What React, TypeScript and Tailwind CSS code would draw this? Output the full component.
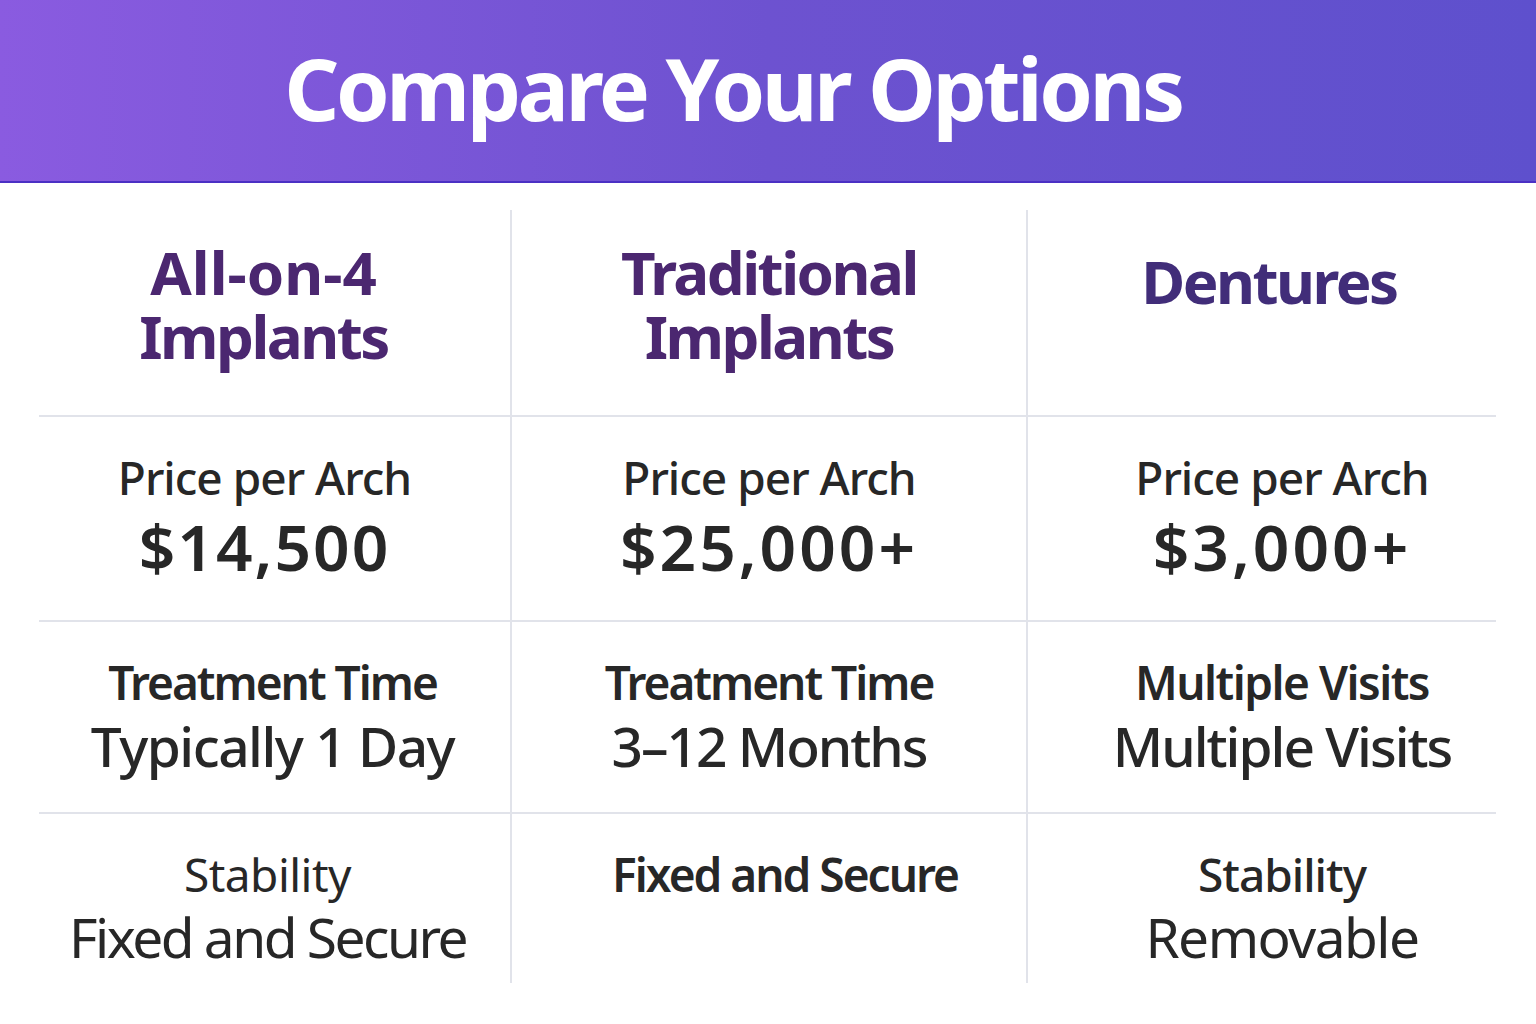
const font = { fontFamily: '"Noto Sans", "Open Sans", sans-serif' };

type Cell = {
  label?: string;
  labelClass?: string;
  value?: string;
  valueClass?: string;
  cellClass: string;
};

const rows: Cell[][] = [
  [
    {
      label: "Price per Arch",
      labelClass: "font-medium tracking-[-1px]",
      value: "$14,500",
      valueClass: "text-[64px] font-semibold leading-[1.2] tracking-[2px] mt-[4px]",
      cellClass: "pr-[20px]",
    },
    {
      label: "Price per Arch",
      labelClass: "font-medium tracking-[-1px]",
      value: "$25,000+",
      valueClass: "text-[64px] font-semibold leading-[1.2] tracking-[3px] mt-[4px]",
      cellClass: "",
    },
    {
      label: "Price per Arch",
      labelClass: "font-medium tracking-[-1px]",
      value: "$3,000+",
      valueClass: "text-[64px] font-semibold leading-[1.2] tracking-[3px] mt-[4px]",
      cellClass: "pl-[40px]",
    },
  ],
  [
    {
      label: "Treatment Time",
      labelClass: "font-semibold tracking-[-2px]",
      value: "Typically 1 Day",
      valueClass: "text-[55px] font-medium leading-[1.2] tracking-[-1.5px] mt-[3px]",
      cellClass: "pr-[4px]",
    },
    {
      label: "Treatment Time",
      labelClass: "font-semibold tracking-[-2px]",
      value: "3–12 Months",
      valueClass: "text-[55px] font-medium leading-[1.2] tracking-[-2px] mt-[3px]",
      cellClass: "",
    },
    {
      label: "Multiple Visits",
      labelClass: "font-semibold tracking-[-1.5px]",
      value: "Multiple Visits",
      valueClass: "text-[55px] font-medium leading-[1.2] tracking-[-2px] mt-[3px]",
      cellClass: "pl-[40px]",
    },
  ],
  [
    {
      label: "Stability",
      labelClass: "font-normal tracking-[-0.5px]",
      value: "Fixed and Secure",
      valueClass: "text-[55px] font-normal leading-[1.2] tracking-[-2.5px] mt-[2px]",
      cellClass: "pl-[6px] pr-[20px]",
    },
    {
      label: "Fixed and Secure",
      labelClass: "font-semibold tracking-[-2px]",
      cellClass: "pl-[32px]",
    },
    {
      label: "Stability",
      labelClass: "font-medium tracking-[-1px]",
      value: "Removable",
      valueClass: "text-[55px] font-normal leading-[1.2] tracking-[-1.5px] mt-[2px]",
      cellClass: "pl-[40px]",
    },
  ],
];

const rowHeights = ["h-[205px] border-b-2", "h-[192px] border-b-2", "h-[169px]"];

const App = () => {
  return (
    <div className="w-[1536px] h-[1024px] bg-white overflow-hidden" style={font}>
      <div className="h-[183px] border-b-2 border-[#4b30c4] bg-gradient-to-r from-[#8a5be0] via-[#6d52d0] to-[#5e50cd] flex justify-center pt-[45px] pr-[70px]">
        <h1 className="text-white text-[86px] font-bold leading-none tracking-[-3.5px]">
          Compare Your Options
        </h1>
      </div>

      <div className="ml-[39px] mt-[27px] w-[1457px] grid grid-cols-[473px_516px_468px] text-[#272727]">
        <div className="h-[207px] border-b-2 border-r-2 border-[#e1e3ea] flex justify-center pt-[30px] pr-[22px]">
          <h2 className="text-center text-[60px] font-bold leading-[64px] tracking-[-2.5px] text-[#4b2770]">
            <span className="tracking-[0px]">All-on-4</span>
            <br />
            Implants
          </h2>
        </div>
        <div className="h-[207px] border-b-2 border-r-2 border-[#e1e3ea] flex justify-center pt-[30px]">
          <h2 className="text-center text-[60px] font-bold leading-[64px] tracking-[-2.5px] text-[#4b2770]">
            Traditional
            <br />
            Implants
          </h2>
        </div>
        <div className="h-[207px] border-b-2 border-[#e1e3ea] flex justify-center pt-[39px] pl-[14px]">
          <h2 className="text-[60px] font-bold leading-[64px] tracking-[-2.5px] text-[#412d79]">Dentures</h2>
        </div>

        {rows.map((row, ri) =>
          row.map((cell, ci) => (
            <div
              key={`${ri}-${ci}`}
              className={`${rowHeights[ri]} ${ci < 2 ? "border-r-2" : ""} border-[#e1e3ea] flex flex-col items-center pt-[33px] ${cell.cellClass}`}
            >
              {cell.label && (
                <span className={`text-[46px] leading-[1.2] ${cell.labelClass}`}>{cell.label}</span>
              )}
              {cell.value && <span className={cell.valueClass}>{cell.value}</span>}
            </div>
          ))
        )}
      </div>
    </div>
  );
};

export default App;
